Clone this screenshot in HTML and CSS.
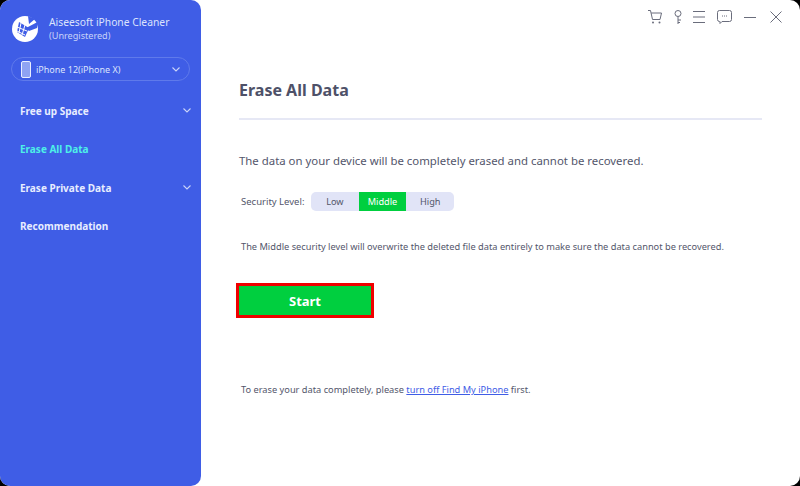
FILE: index.html
```html
<!doctype html>
<html lang="en">
<head>
<meta charset="utf-8">
<meta name="viewport" content="width=device-width, initial-scale=1">
<title>Aiseesoft iPhone Cleaner</title>
<link rel="stylesheet" href="styles.css">
</head>

<body>
	<div class="janela">
		<aside class="lateral">
			<div class="marca">
				<svg class="logo" viewBox="0 0 28 28" width="28" height="28">
					<circle cx="14" cy="14" r="13" fill="#fff"/>
					<path d="M27.500 6.500L15 13l3 3 8-3z M17 1l7 3-6 5z" fill="#3f5de6"/>
					<path d="M8 7l10 6-4 9-8-5z" fill="#3f5de6"/>
					<path d="M6 12l10 4M6 16l8 4M10 8l-2 10M14 10l-3 10" stroke="#fff" stroke-width="1" fill="none"/>
				</svg>
				<div class="marca-texto">
					<div class="marca-nome">Aiseesoft iPhone Cleaner</div>
					<div class="marca-sub">(Unregistered)</div>
				</div>
			</div>
			<div class="aparelho">
				<svg viewBox="0 0 10 17" width="10" height="17">
					<rect x="0.500" y="0.500" width="9" height="16" rx="1.500" fill="#8FA3F3" stroke="#E8EDFF"/>
				</svg>
				<span class="aparelho-nome">iPhone 12(iPhone X)</span>
				<svg class="seta" viewBox="0 0 8 5" width="8" height="5"><path d="M.5.500L4 4 7.500.500" fill="none" stroke="#C9D3F8" stroke-width="1.100"/></svg>
			</div>
			<nav class="menu">
				<div class="menu-item"><span>Free up Space</span><svg class="seta" viewBox="0 0 8 5" width="8" height="5"><path d="M.5.500L4 4 7.500.500" fill="none" stroke="#C9D3F8" stroke-width="1.100"/></svg></div>
				<div class="menu-item ativo"><span>Erase All Data</span></div>
				<div class="menu-item"><span>Erase Private Data</span><svg class="seta" viewBox="0 0 8 5" width="8" height="5"><path d="M.5.500L4 4 7.500.500" fill="none" stroke="#C9D3F8" stroke-width="1.100"/></svg></div>
				<div class="menu-item"><span>Recommendation</span></div>
			</nav>
		</aside>
		<main class="conteudo">
			<div class="barra">
				<svg viewBox="0 0 14 14" width="14" height="14"><path d="M0 .5h2.500l2 9h7.500l1.500-6.500H3.200" fill="none" stroke="#6A6D7C"/><circle cx="5" cy="12.500" r="1" fill="#6A6D7C"/><circle cx="11.500" cy="12.500" r="1" fill="#6A6D7C"/></svg>
				<svg viewBox="0 0 8 14" width="8" height="14"><circle cx="4" cy="3.500" r="3" fill="none" stroke="#6A6D7C"/><path d="M4 6.500V14M4 10h3M4 12.500h2" fill="none" stroke="#6A6D7C"/></svg>
				<svg class="icone-lista" viewBox="0 0 12 12" width="12" height="12"><path d="M0 .5h12M0 6h12M0 11.500h12" fill="none" stroke="#6A6D7C"/></svg>
				<svg viewBox="0 0 15 14" width="15" height="14"><path d="M2.500.5h10a2 2 0 0 1 2 2v7a2 2 0 0 1-2 2H5l-2 2v-2h-.5a2 2 0 0 1-2-2v-7a2 2 0 0 1 2-2z" fill="none" stroke="#6A6D7C"/><path d="M5 6h1M7 6h1M9 6h1" stroke="#6A6D7C"/></svg>
				<svg viewBox="0 0 12 12" width="12" height="12"><path d="M0 6.500h12" fill="none" stroke="#6A6D7C"/></svg>
				<svg class="icone-fechar" viewBox="0 0 12 12" width="12" height="12"><path d="M.5.500l11 11M11.500.500l-11 11" fill="none" stroke="#6A6D7C"/></svg>
			</div>
			<h1 class="titulo">Erase All Data</h1>
			<p class="aviso">The data on your device will be completely erased and cannot be recovered.</p>
			<div class="nivel">
				<span class="nivel-rotulo">Security Level:</span>
				<div class="nivel-opcoes">
					<span class="opcao">Low</span>
					<span class="opcao marcada">Middle</span>
					<span class="opcao">High</span>
				</div>
			</div>
			<p class="detalhe">The Middle security level will overwrite the deleted file data entirely to make sure the data cannot be recovered.</p>
			<button class="botao-iniciar">Start</button>
			<p class="rodape">To erase your data completely, please <a href="#">turn off Find My iPhone</a> first.</p>
		</main>
	</div>
</body>
</html>
```
FILE: styles.css
```css
*
{
	margin: 0;
	padding: 0;
	box-sizing: border-box;
}
html, body
{
	height: 100%;
	background-color: #000;
}
body
{
	font-family: "Noto Sans", Verdana, sans-serif;
	overflow: hidden;
}
.janela
{
	display: flex;
	width: 800px;
	height: 486px;
	background-color: #FFF;
	border-radius: 10px;
	overflow: hidden;
}
.lateral
{
	flex: none;
	width: 201px;
	background-color: #3F5DE6;
	border-radius: 0 10px 10px 0;
	padding: 15px 11px 0 11px;
	color: #E8EDFF;
}
.marca
{
	display: flex;
	align-items: center;
	gap: 10px;
}
.logo
{
	flex: none;
}
.marca-nome
{
	font-size: 10.300px;
	line-height: 13px;
	color: #DCE3FD;
}
.marca-sub
{
	font-size: 9.100px;
	line-height: 13px;
	color: #C9D3F8;
}
.aparelho
{
	display: flex;
	align-items: center;
	height: 24px;
	margin-top: 14px;
	padding: 0 9px;
	border: 1px solid #5F7AEB;
	border-radius: 12px;
}
.aparelho-nome
{
	flex: 1;
	font-size: 9px;
	margin-left: 5px;
	color: #DCE3FD;
}
.menu
{
	margin-top: 10.500px;
}
.menu-item
{
	display: flex;
	align-items: center;
	justify-content: space-between;
	height: 38.500px;
	margin-right: -1px;
	padding-left: 9px;
	font-size: 10px;
	font-weight: bold;
	color: #E8EDFF;
}
.ativo
{
	color: #4DF0E8;
}
.conteudo
{
	flex: 1;
	padding: 10px 38px 0 38px;
	color: #53566B;
}
.barra
{
	display: flex;
	align-items: center;
	justify-content: flex-end;
	gap: 12px;
	height: 14px;
	margin-right: -20px;
}
.icone-lista
{
	margin-left: -1px;
}
.icone-fechar
{
	margin-left: 2px;
}
.titulo
{
	font-size: 16px;
	line-height: 21px;
	margin-top: 56px;
	padding-bottom: 17px;
	border-bottom: 2px solid #E6E8F5;
	color: #4E5168;
}
.aviso
{
	font-size: 11.400px;
	line-height: 16px;
	margin-top: 33px;
}
.nivel
{
	display: flex;
	align-items: center;
	margin-top: 23px;
	margin-left: 2px;
}
.nivel-rotulo
{
	font-size: 9.500px;
	width: 70px;
	white-space: nowrap;
}
.nivel-opcoes
{
	display: flex;
	height: 19px;
	background-color: #E1E4F7;
	border-radius: 5px;
	overflow: hidden;
}
.opcao
{
	width: 47.700px;
	line-height: 19px;
	text-align: center;
	font-size: 9.200px;
}
.marcada
{
	background-color: #00CF3F;
	color: #FFF;
}
.detalhe
{
	font-size: 9.250px;
	line-height: 13px;
	margin-top: 29px;
	margin-left: 2px;
	white-space: nowrap;
}
.botao-iniciar
{
	display: block;
	width: 138px;
	height: 35px;
	margin-top: 30px;
	margin-left: -3px;
	background-color: #00CF3F;
	border: 3px solid #F00000;
	color: #FFF;
	font-family: inherit;
	font-size: 13px;
	font-weight: bold;
}
.rodape
{
	font-size: 9.250px;
	line-height: 14px;
	margin-top: 65px;
	margin-left: 2px;
}
.rodape a
{
	color: #3F5DE6;
}
```
